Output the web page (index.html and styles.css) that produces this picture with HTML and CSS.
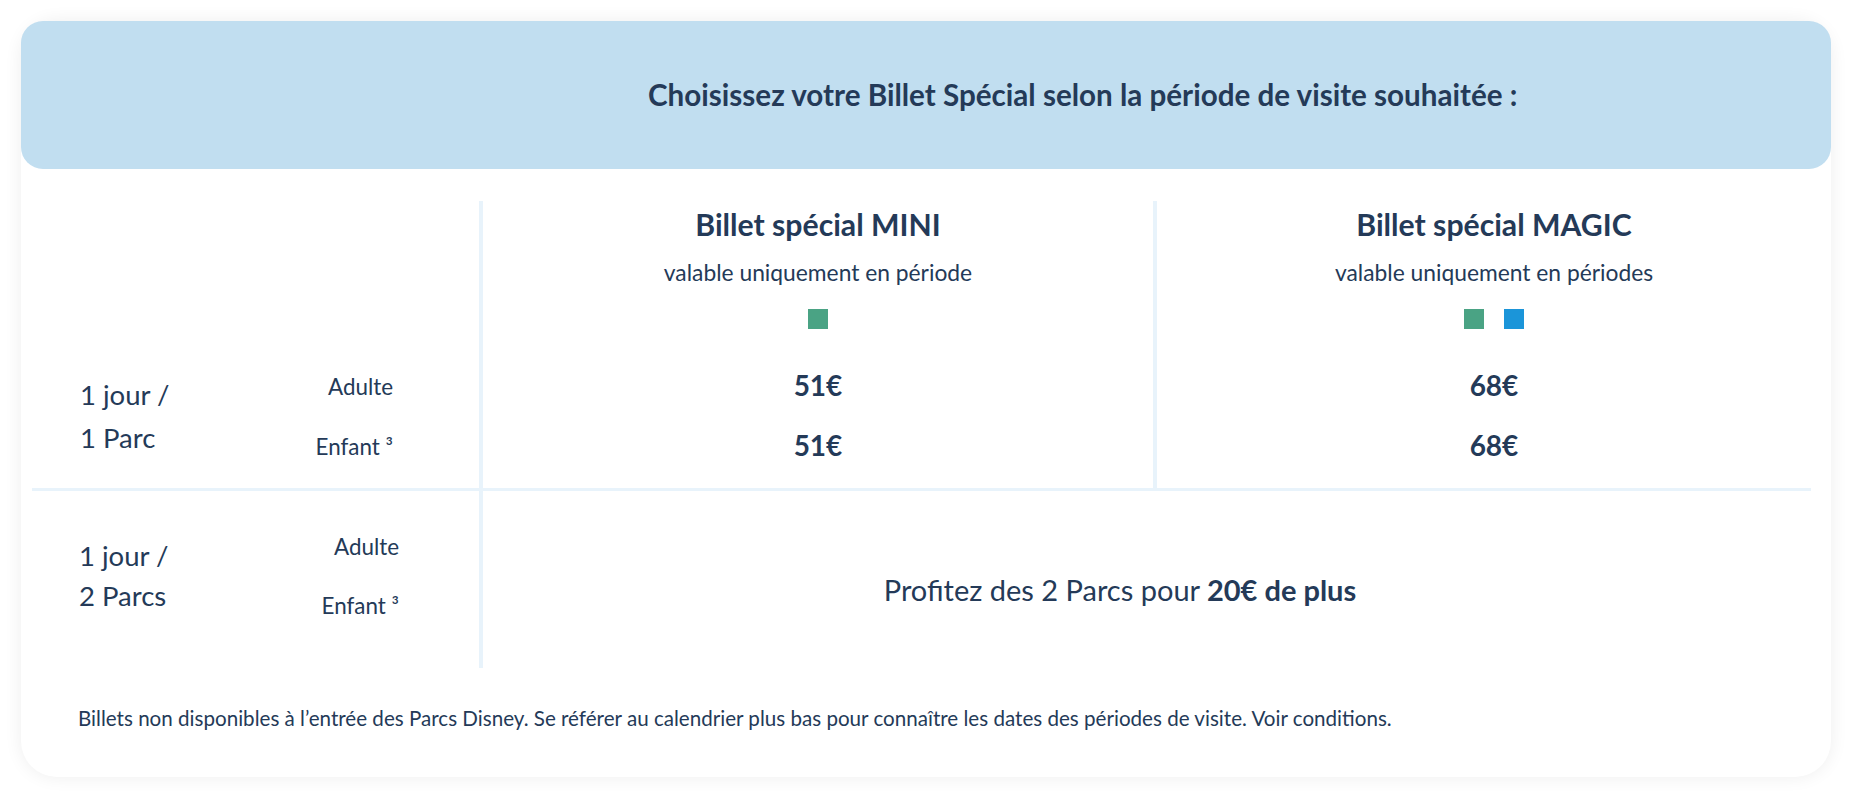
FILE: index.html
```html
<!DOCTYPE html>
<html lang="fr">
<head>
<meta charset="utf-8">
<title>Billet Spécial</title>
<link rel="stylesheet" href="styles.css">
</head>
<body>
<div class="card">
  <div class="banner">
    <h2 class="banner-title">Choisissez votre Billet Spécial selon la période de visite souhaitée :</h2>
  </div>
  <div class="grid">
    <div class="cell c1 head-empty"></div>
    <div class="cell c2 head">
      <div class="ticket-name">Billet spécial MINI</div>
      <div class="ticket-sub">valable uniquement en période</div>
      <div class="swatches"><span class="sw green"></span></div>
    </div>
    <div class="cell head">
      <div class="ticket-name">Billet spécial MAGIC</div>
      <div class="ticket-sub">valable uniquement en périodes</div>
      <div class="swatches"><span class="sw green"></span><span class="sw blue"></span></div>
    </div>

    <div class="cell c1 row1">
      <div class="duration">1 jour /<br>1 Parc</div>
      <div class="labels"><span>Adulte</span><span>Enfant ³</span></div>
    </div>
    <div class="cell c2 prices">
      <span>51€</span><span>51€</span>
    </div>
    <div class="cell prices">
      <span>68€</span><span>68€</span>
    </div>

    <div class="divider"></div>

    <div class="cell c1 row2">
      <div class="duration">1 jour /<br>2 Parcs</div>
      <div class="labels"><span>Adulte</span><span>Enfant ³</span></div>
    </div>
    <div class="cell merged">
      <p>Profitez des 2 Parcs pour <strong>20€ de plus</strong></p>
    </div>
  </div>
  <p class="note">Billets non disponibles à l’entrée des Parcs Disney. Se référer au calendrier plus bas pour connaître les dates des périodes de visite. Voir conditions.</p>
</div>
</body>
</html>
```

FILE: styles.css
```css
* { box-sizing: border-box; }
html, body { margin: 0; padding: 0; background: #ffffff; }
body {
  font-family: Lato, "Open Sans", "DejaVu Sans", sans-serif;
  color: #243a58;
}
.card {
  margin: 21px 21px 19px 21px;
  width: 1810px;
  height: 756px;
  background: #ffffff;
  border-radius: 36px;
  box-shadow: 0 0 18px rgba(0, 0, 0, 0.07);
}
.banner {
  height: 148px;
  background: #c1def0;
  border-radius: 22px;
  display: flex;
  align-items: center;
  padding-left: 627px;
}
.banner-title {
  margin: 0;
  font-size: 29.6px;
  font-weight: 700;
  line-height: 36px;
}
.grid {
  margin-top: 32px;
  display: grid;
  grid-template-columns: 462px 674px 674px;
  grid-template-rows: 144px 143px 3px 177px;
}
.c1, .c2 { border-right: 4px solid #e8f3fb; }
.head {
  display: flex;
  flex-direction: column;
  align-items: center;
  padding-top: 5px;
}
.ticket-name {
  font-size: 30.2px;
  font-weight: 700;
  line-height: 36px;
}
.ticket-sub {
  margin-top: 16px;
  font-size: 22.8px;
  line-height: 28px;
}
.swatches {
  margin-top: 23px;
  display: flex;
  gap: 20px;
}
.sw { width: 20px; height: 20px; display: block; }
.green { background: #4aa384; }
.blue { background: #1b95d9; }

.row1, .row2 {
  display: flex;
  justify-content: space-between;
  align-items: flex-start;
}
.row1 { padding: 0 86px 0 59px; }
.row2 { padding: 0 80px 0 58px; }
.duration { font-size: 27.5px; }
.row1 .duration { margin-top: 28px; line-height: 43px; }
.row2 .duration { margin-top: 45px; line-height: 40px; }
.labels {
  display: flex;
  flex-direction: column;
  align-items: flex-end;
  font-size: 22.4px;
  line-height: 30px;
}
.row1 .labels { margin-top: 27px; gap: 30px; }
.row2 .labels { margin-top: 41px; gap: 29px; }
.prices {
  display: flex;
  flex-direction: column;
  align-items: center;
  gap: 26px;
  padding-top: 23px;
  font-size: 28px;
  font-weight: 700;
  line-height: 34px;
}
.divider {
  grid-column: 1 / -1;
  margin: 0 20px 0 11px;
  background: #e8f3fb;
}
.merged {
  grid-column: 2 / 4;
  display: flex;
  justify-content: center;
  padding: 82px 74px 0 0;
}
.merged p {
  margin: 0;
  font-size: 29px;
  line-height: 34px;
}
.merged strong { font-weight: 700; }
.note {
  margin: 37px 0 0 57px;
  font-size: 20.6px;
  line-height: 26px;
}
```
